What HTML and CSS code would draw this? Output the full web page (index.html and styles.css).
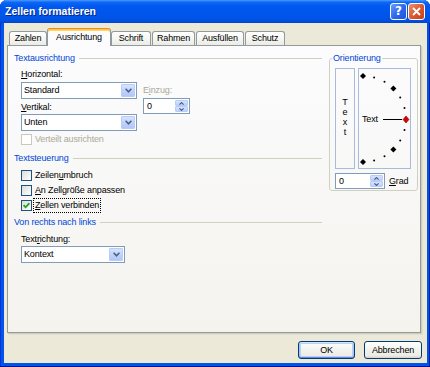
FILE: index.html
```html
<!DOCTYPE html>
<html lang="de">
<head>
<meta charset="utf-8">
<title>Zellen formatieren</title>
<link rel="stylesheet" href="styles.css">
</head>
<body>
<div class="window">
  <div class="titlebar">
    <span class="title">Zellen formatieren</span>
    <div class="tb-buttons">
      <span class="tb-btn help">?</span>
      <span class="tb-btn close"><svg width="9" height="9" viewBox="0 0 9 9"><path d="M1 1 L8 8 M8 1 L1 8" stroke="#fff" stroke-width="1.8" fill="none"/></svg></span>
    </div>
  </div>
  <div class="body">
    <div class="tabs">
      <div class="tab t-zahlen">Zahlen</div>
      <div class="tab sel t-ausr">Ausrichtung</div>
      <div class="tab t-schrift">Schrift</div>
      <div class="tab t-rahmen">Rahmen</div>
      <div class="tab t-ausf">Ausfüllen</div>
      <div class="tab t-schutz">Schutz</div>
    </div>
    <div class="panel">
      <div class="left">
        <div class="group-h">Textausrichtung</div>
        <div class="indent">
          <div class="align-grid">
            <div class="col">
              <div class="lbl"><u>H</u>orizontal:</div>
              <div class="combo w116 mt2"><span class="val">Standard</span><span class="drop"><svg width="7" height="5" viewBox="0 0 7 5"><polyline points="0.6,0.8 3.5,3.8 6.4,0.8" fill="none" stroke="#4D6185" stroke-width="1.6"/></svg></span></div>
              <div class="lbl mt3"><u>V</u>ertikal:</div>
              <div class="combo w116 mt1"><span class="val">Unten</span><span class="drop"><svg width="7" height="5" viewBox="0 0 7 5"><polyline points="0.6,0.8 3.5,3.8 6.4,0.8" fill="none" stroke="#4D6185" stroke-width="1.6"/></svg></span></div>
            </div>
            <div class="col einzug">
              <div class="lbl dis">E<u>i</u>nzug:</div>
              <div class="spin w47 mt2"><span class="val">0</span><span class="spin-btns"><span class="sb"><svg width="5" height="3" viewBox="0 0 5 3"><polyline points="0.4,2.6 2.5,0.6 4.6,2.6" fill="none" stroke="#4D6185" stroke-width="1.2"/></svg></span><span class="sb"><svg width="5" height="3" viewBox="0 0 5 3"><polyline points="0.4,0.4 2.5,2.4 4.6,0.4" fill="none" stroke="#4D6185" stroke-width="1.2"/></svg></span></span></div>
            </div>
          </div>
          <div class="check dis row13 mt2"><span class="box"></span><span>Verteilt ausrichten</span></div>
        </div>
        <div class="group-h mt7">Textsteuerung</div>
        <div class="indent mt4">
          <div class="check"><span class="box"></span><span>Zeilen<u>u</u>mbruch</span></div>
          <div class="check"><span class="box"></span><span><u>A</u>n Zellgröße anpassen</span></div>
          <div class="check"><span class="box"><svg width="9" height="9" viewBox="0 0 9 9"><polyline points="1.6,4.2 3.6,6.3 7.4,2.2" fill="none" stroke="#21A121" stroke-width="1.8"/></svg></span><span class="focus"><u>Z</u>ellen verbinden</span></div>
        </div>
        <div class="group-h mt4">Von rechts nach links</div>
        <div class="indent">
          <div class="lbl mt6">Text<u>r</u>ichtung:</div>
          <div class="combo w104 mt1"><span class="val">Kontext</span><span class="drop"><svg width="7" height="5" viewBox="0 0 7 5"><polyline points="0.6,0.8 3.5,3.8 6.4,0.8" fill="none" stroke="#4D6185" stroke-width="1.6"/></svg></span></div>
        </div>
      </div>
      <fieldset class="orient">
        <legend>Orientierung</legend>
        <div class="orient-top">
          <div class="vtext"><span>T</span><span>e</span><span>x</span><span>t</span></div>
          <div class="dial">
            <svg class="dial-svg" width="51" height="99" viewBox="0 0 51 99">
              <g fill="#000">
                <circle cx="15.1" cy="8.5" r="1"/>
                <circle cx="25.5" cy="12.8" r="1"/>
                <circle cx="41.2" cy="28.5" r="1"/>
                <circle cx="45.5" cy="38.9" r="1"/>
                <circle cx="45.5" cy="61.1" r="1"/>
                <circle cx="41.2" cy="71.5" r="1"/>
                <circle cx="25.5" cy="87.2" r="1"/>
                <circle cx="15.1" cy="91.5" r="1"/>
                <polygon points="4,4 7,7 4,10 1,7"/>
                <polygon points="34.4,16.6 37.4,19.6 34.4,22.6 31.4,19.6"/>
                <polygon points="34.4,77.4 37.4,80.4 34.4,83.4 31.4,80.4"/>
                <polygon points="4,90 7,93 4,96 1,93"/>
              </g>
              <line x1="24" y1="50.5" x2="43" y2="50.5" stroke="#000" stroke-width="1"/>
              <polygon points="47,47 50,50.5 47,54 44,50.5" fill="#E00000" stroke="#800000" stroke-width="0.6"/>
            </svg>
            <span class="dial-text">Text</span>
          </div>
        </div>
        <div class="orient-spin">
          <div class="spin w50"><span class="val">0</span><span class="spin-btns"><span class="sb"><svg width="5" height="3" viewBox="0 0 5 3"><polyline points="0.4,2.6 2.5,0.6 4.6,2.6" fill="none" stroke="#4D6185" stroke-width="1.2"/></svg></span><span class="sb"><svg width="5" height="3" viewBox="0 0 5 3"><polyline points="0.4,0.4 2.5,2.4 4.6,0.4" fill="none" stroke="#4D6185" stroke-width="1.2"/></svg></span></span></div>
          <span class="lbl grad"><u>G</u>rad</span>
        </div>
      </fieldset>
    </div>
    <div class="actions">
      <button class="btn default">OK</button>
      <button class="btn">Abbrechen</button>
    </div>
  </div>
</div>
</body>
</html>
```

FILE: styles.css
```css
* { box-sizing: border-box; }
html, body { margin: 0; padding: 0; background: #ffffff; }
body {
  width: 430px;
  height: 367px;
  overflow: hidden;
  font-family: "Liberation Sans", Arial, sans-serif;
  font-size: 9px;
  line-height: 11px;
  letter-spacing: -0.15px;
  color: #000;
}
u { text-decoration: underline; text-underline-offset: 1px; }

.window {
  width: 430px;
  height: 367px;
  display: flex;
  flex-direction: column;
  background: #0054E6;
  border-radius: 7px 7px 0 0;
  overflow: hidden;
  box-shadow: inset 0 -1px 0 #00138C, inset 1px 0 0 #0831D9, inset -1px 0 0 #001EA0;
}

.titlebar {
  height: 23px;
  flex: none;
  display: flex;
  align-items: center;
  padding: 0 5px 0 5px;
  background: linear-gradient(#4B9BFF 0%, #0C66F6 10%, #0058EE 28%, #0055EA 70%, #0051E2 88%, #0046CF 100%);
}
.title {
  flex: 1;
  color: #fff;
  font-weight: bold;
  font-size: 10.5px;
  letter-spacing: 0;
  text-shadow: 1px 1px 0 #0A2A88;
}
.tb-buttons { display: flex; gap: 1px; }
.tb-btn {
  width: 17px;
  height: 17px;
  border: 1px solid #fff;
  border-radius: 3px;
  display: flex;
  align-items: center;
  justify-content: center;
  color: #fff;
  font-family: "DejaVu Sans", sans-serif;
  font-weight: bold;
  font-size: 12px;
  letter-spacing: 0;
}
.help { background: linear-gradient(135deg, #6B9BFA, #2A66EC 55%, #1F55D8); }
.close { background: linear-gradient(135deg, #EC9071, #DB5A32 50%, #C83E18); }

.body {
  flex: 1;
  display: flex;
  flex-direction: column;
  margin: 0 3px 4px 4px;
  padding: 5px 0 0 3px;
  background: #ECE9D8;
}

.tabs {
  display: flex;
  align-items: flex-end;
  height: 17px;
  padding-left: 2px;
  position: relative;
  z-index: 1;
}
.tab {
  height: 14px;
  border: 1px solid #919B9C;
  border-bottom: none;
  border-radius: 3px 3px 0 0;
  background: linear-gradient(#FFFFFF, #F6F6F3 50%, #ECEBE6);
  text-align: center;
  line-height: 13px;
  white-space: nowrap;
}
.tab.sel {
  height: 18px;
  margin-bottom: -1px;
  border-top: 1px solid #E68B2C;
  box-shadow: inset 0 1px 0 #FFC83C, inset 0 2px 0 #FFD56B;
  background: #FCFCFE;
  line-height: 15px;
  padding-top: 1px;
}
.t-zahlen { width: 38px; }
.t-ausr { width: 64px; }
.t-schrift { width: 40px; }
.t-rahmen { width: 43px; margin-left: 1px; }
.t-ausf { width: 48px; margin-left: 1px; }
.t-schutz { width: 40px; margin-left: 1px; }

.panel {
  width: 414px;
  height: 288px;
  flex: none;
  border: 1px solid #919B9C;
  background: linear-gradient(#FCFCFE, #F4F3EE);
  box-shadow: 1px 1px 0 #D0CEBF, 2px 2px 0 #E3E0D0;
  display: flex;
  align-items: flex-start;
  padding: 7px 0 0 6px;
}

.left { width: 308px; flex: none; }
.group-h {
  display: flex;
  align-items: center;
  height: 11px;
  color: #0046D5;
  white-space: nowrap;
}
.group-h::after {
  content: "";
  flex: 1;
  height: 1px;
  margin-left: 4px;
  background: #D0D0BF;
}
.indent { padding-left: 7px; }

.mt1 { margin-top: 1px; }
.mt2 { margin-top: 2px; }
.mt3 { margin-top: 3px; }
.mt4 { margin-top: 4px; }
.mt6 { margin-top: 6px; }
.mt7 { margin-top: 7px; }

.lbl { height: 11px; white-space: nowrap; }
.dis { color: #ACA899; }

.align-grid { display: flex; margin-top: 5px; }
.col { display: flex; flex-direction: column; }
.einzug { margin-left: 6px; padding-top: 16px; }

.combo {
  display: flex;
  height: 17px;
  border: 1px solid #7F9DB9;
  background: #fff;
}
.combo .val { flex: 1; padding-left: 2px; line-height: 15px; }
.drop {
  width: 14px;
  margin: 1px;
  border: 1px solid #B7CCF8;
  border-radius: 1px;
  background: linear-gradient(#D7E3FD, #C1D3FB 50%, #B2C7F5);
  display: flex;
  align-items: center;
  justify-content: center;
}
.w116 { width: 116px; }
.w104 { width: 104px; }
.w47 { width: 47px; }
.w50 { width: 50px; }

.spin {
  display: flex;
  height: 16px;
  border: 1px solid #7F9DB9;
  background: #fff;
}
.spin .val { flex: 1; padding-left: 3px; line-height: 14px; color: #000; }
.spin-btns {
  width: 13px;
  margin: 1px;
  display: flex;
  flex-direction: column;
}
.sb {
  flex: 1;
  display: flex;
  align-items: center;
  justify-content: center;
  border: 1px solid #B7CCF8;
  border-radius: 1px;
  background: linear-gradient(#D7E3FD, #BED0FA);
}

.check {
  display: flex;
  align-items: center;
  height: 15px;
  white-space: nowrap;
}
.check.row13 { height: 13px; }
.box {
  width: 11px;
  height: 11px;
  flex: none;
  margin-right: 3px;
  border: 1px solid #1C5180;
  background: linear-gradient(135deg, #DCDCD7, #FFFFFF);
  display: flex;
  align-items: center;
  justify-content: center;
}
.check.dis .box { border-color: #CAC8BB; background: #fff; }
.focus {
  outline: 1px dotted #000;
  padding: 1px;
  margin-left: -1px;
  line-height: 11px;
}

.orient {
  margin: 0 0 0 7px;
  width: 89px;
  padding: 4px 6px 1px 5px;
  border: 1px solid #D0D0BF;
  border-radius: 3px;
  min-width: 0;
}
.orient legend {
  color: #0046D5;
  padding: 0 1px;
  margin-left: -3px;
  line-height: 11px;
  white-space: nowrap;
}
.orient-top { display: flex; }
.vtext {
  width: 20px;
  height: 101px;
  border: 1px solid #A8BCD9;
  display: flex;
  flex-direction: column;
  align-items: center;
  justify-content: center;
  line-height: 10px;
  padding-bottom: 4px;
}
.dial {
  position: relative;
  width: 53px;
  height: 101px;
  margin-left: 3px;
  border: 1px solid #A8BCD9;
}
.dial-svg { position: absolute; left: 0; top: 0; }
.dial-text { position: absolute; left: 3px; top: 45px; line-height: 11px; }

.orient-spin {
  display: flex;
  align-items: center;
  margin-top: 4px;
}
.grad { margin-left: 4px; line-height: 11px; }

.actions {
  display: flex;
  justify-content: flex-end;
  gap: 9px;
  margin-top: 8px;
  padding-right: 5px;
}
.btn {
  height: 18px;
  padding: 0;
  border: 1px solid #003C74;
  border-radius: 3px;
  background: linear-gradient(#FFFFFF, #F4F4F0 40%, #ECEBE6 85%, #D6D0C5);
  font-family: "Liberation Sans", Arial, sans-serif;
  font-size: 9px;
  letter-spacing: -0.15px;
  color: #000;
  line-height: 16px;
}
.btn.default {
  width: 57px;
  box-shadow: inset 0 1px 0 #CEE7FF, inset 0 -1px 0 #6982EE, inset 1px 0 0 #A8C3F5, inset -1px 0 0 #A8C3F5, inset 0 0 0 2px #B9D1F7;
}
.btn:not(.default) { width: 58px; }
```
